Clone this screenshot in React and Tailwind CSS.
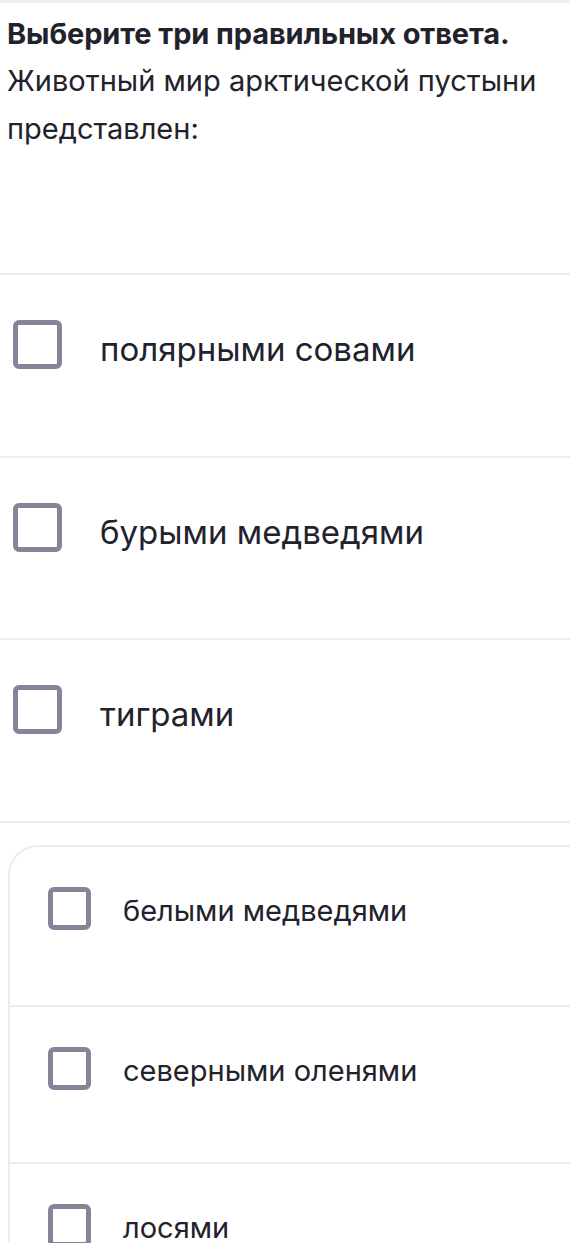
import React from "react";

const outer = ["полярными совами", "бурыми медведями", "тиграми"];
const inner = ["белыми медведями", "северными оленями", "лосями"];

const Box = ({ size }) => (
  <div
    className={`${size} shrink-0 rounded-[6px] border-[5px] border-[#85859a] bg-white`}
  />
);

export default function App() {
  return (
    <div
      className="h-[1243px] bg-white text-[#22222c] overflow-hidden"
      style={{ fontFamily: "Inter, 'Noto Sans', sans-serif" }}
    >
      <div className="border-t-[3px] border-[#efeff3]" />
      <div className="px-[7px] pt-[8px] h-[270px]">
        <h1 className="text-[29px] font-bold leading-[46px] tracking-[-0.1px]">
          Выберите три правильных ответа.
        </h1>
        <p className="text-[29px] leading-[48px]">
          Животный мир арктической пустыни представлен:
        </p>
      </div>

      {outer.map((t) => (
        <div
          key={t}
          className="h-[182.7px] border-t-[2px] border-[#ececf0] flex items-start pl-[13px] pt-[45px] gap-[38px]"
        >
          <Box size="w-[49px] h-[49px]" />
          <span className="text-[33px] leading-[49px] pt-[5px]">{t}</span>
        </div>
      ))}

      <div className="border-t-[2px] border-[#ececf0] pt-[22px]">
        <div className="ml-[8px] rounded-tl-[30px] border-t-[2px] border-l-[2px] border-[#ececf0]">
          {inner.map((t, i) => (
            <div
              key={t}
              className={`h-[157.5px] flex items-start pl-[38px] pt-[40px] gap-[32px] ${
                i > 0 ? "border-t-[2px] border-[#ececf0]" : ""
              }`}
            >
              <Box size="w-[43px] h-[43px]" />
              <span className="text-[29px] leading-[43px] pt-[2px]">{t}</span>
            </div>
          ))}
        </div>
      </div>
    </div>
  );
}
